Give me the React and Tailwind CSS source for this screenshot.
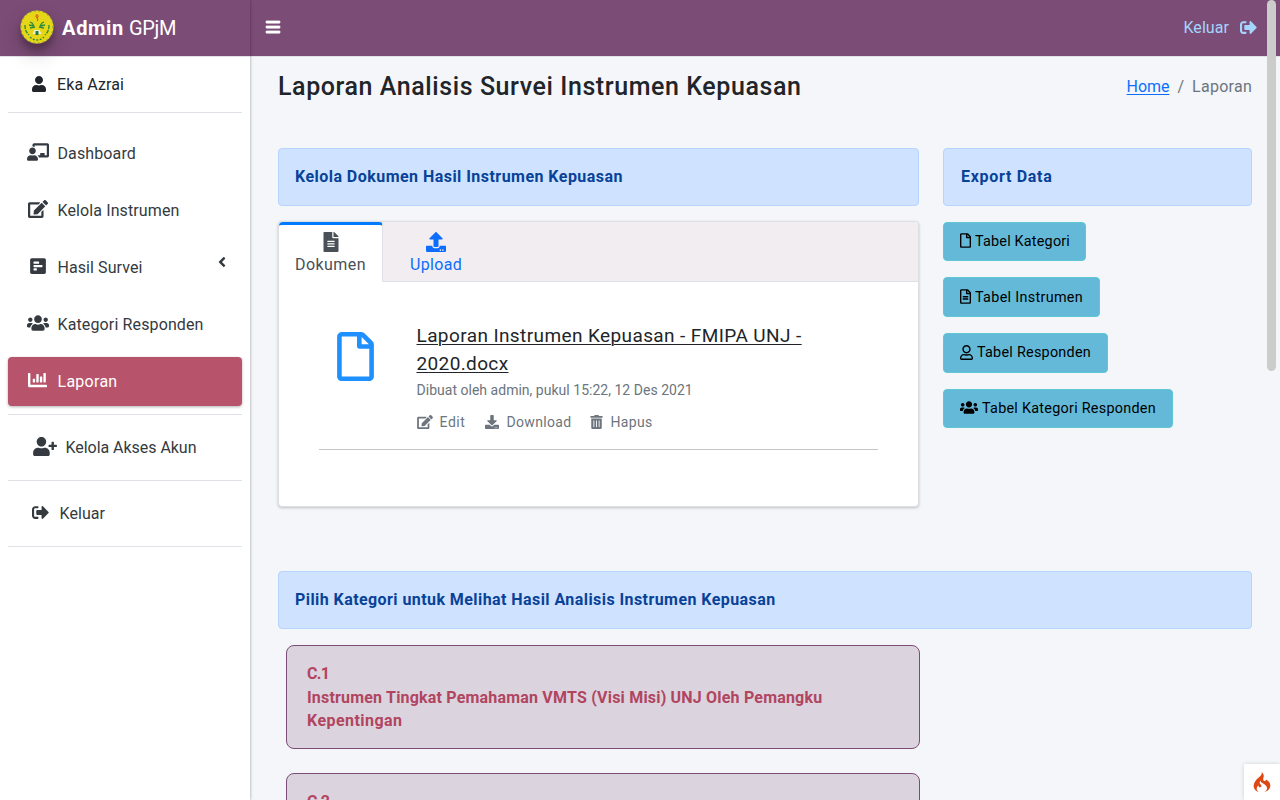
import {
  FaUser, FaRegUser, FaChalkboardTeacher, FaEdit, FaPollH, FaUsers, FaChartBar, FaUserPlus, FaSignOutAlt,
  FaBars, FaAngleLeft, FaFileAlt, FaUpload, FaDownload, FaTrashAlt, FaRegFile, FaRegFileAlt,
} from "react-icons/fa";
import { SiCodeigniter } from "react-icons/si";

const menu = [
  { icon: FaChalkboardTeacher, size: "h-[18px] w-[22px]", label: "Dashboard", tracking: "tracking-[0.12px]" },
  { icon: FaEdit, size: "h-[18px] w-[20px]", label: "Kelola Instrumen", tracking: "tracking-[0.11px]" },
  { icon: FaPollH, size: "h-[18px] w-[18px]", label: "Hasil Survei", tracking: "tracking-[0.08px]", arrow: true },
  { icon: FaUsers, size: "h-[18px] w-[22px]", label: "Kategori Responden", tracking: "tracking-[0.13px]" },
  { icon: FaChartBar, size: "h-[20px] w-[19px]", label: "Laporan", tracking: "tracking-[0.27px]", active: true },
];

const exportsList = [
  { icon: FaRegFile, label: "Tabel Kategori", size: "w-[11px]", width: "w-[143px] h-[39px]", tracking: "tracking-[0.2px]" },
  { icon: FaRegFileAlt, label: "Tabel Instrumen", size: "w-[11px]", width: "w-[157px] h-[40px] pt-px", tracking: "tracking-[0.31px]" },
  { icon: FaRegUser, label: "Tabel Responden", size: "w-[13px]", width: "w-[165px] h-[40px]", tracking: "tracking-[0.25px]" },
  { icon: FaUsers, label: "Tabel Kategori Responden", size: "w-[18px]", width: "w-[230px] h-[39px]", tracking: "tracking-[0.26px]" },
];

function Logo() {
  return (
    <svg viewBox="0 0 34 34" className="-ml-px h-[34px] w-[34px] rounded-full shadow-[0_10px_20px_rgba(0,0,0,0.19),0_6px_6px_rgba(0,0,0,0.23)]">
      <circle cx="17" cy="17" r="16.5" fill="#e5d617" />
      <circle cx="17" cy="17" r="16" fill="none" stroke="#6f9a35" strokeWidth="1" strokeDasharray="1.5 3" />
      <g fill="none" stroke="#2c8a3c" strokeWidth="1.3">
        <path d="M5 15c0 5 1 7 4 10M29 15c0 5-1 7-4 10" strokeDasharray="4 1" />
        <path d="M10 27c4 4 10 4 14 0" strokeDasharray="2 1.5" />
        <path d="M10 12l2 1 2 3M9 15l5 1M10 18l5-1M24 12l-2 1-2 3M25 15l-5 1M24 18l-5-1" />
      </g>
      <path d="M17 4.500l1.300 1.500-1.300 2-1.300-2zM17 8l1 2-1 1" fill="none" stroke="#e0431c" strokeWidth="1" />
      <path d="M12.500 24l2-4h5l2 4z" fill="#f1efd8" />
      <path d="M15.500 21h3v4h-3z" fill="#217c3b" />
    </svg>
  );
}

function Alert({ children, className }) {
  return (
    <div className={`flex h-[58px] items-center rounded border border-[#b6d4fe] bg-[#cfe2ff] px-4 font-bold text-[#084298] ${className}`}>
      {children}
    </div>
  );
}

function Sidebar() {
  return (
    <aside className="relative z-10 flex h-full w-[250px] shrink-0 flex-col bg-white text-[#343a40] shadow-[0_0_3px_rgba(0,0,0,0.38)]">
      <div className="flex h-[57px] shrink-0 items-center gap-2 border-b border-[#dee2e6] bg-[#7b4c76] pl-[21px] pb-[2px] text-xl text-white">
        <Logo />
        <span className="flex gap-[5px] pt-[2px]">
          <b className="font-bold tracking-[0.69px]">Admin</b>
          <span className="font-normal tracking-[-0.3px]">GPjM</span>
        </span>
      </div>
      <div className="mx-2 flex h-14 items-center border-b border-[#dee2e6] pl-[23px] text-[#212529]">
        <FaUser className="mb-px h-4 w-4" />
        <span className="ml-[10px] tracking-[0.11px]">Eka Azrai</span>
      </div>
      <nav className="mx-2 mt-4 flex flex-col gap-2">
        {menu.map(({ icon: Icon, size, label, tracking, arrow, active }) => (
          <div
            key={label}
            className={`flex h-[49px] items-center rounded pl-[14.5px] ${active ? "bg-[#b7546b] text-white shadow-[0_1px_3px_rgba(0,0,0,0.3)]" : ""}`}
          >
            <span className="flex w-[30px] justify-center pb-[3px]"><Icon className={size} /></span>
            <span className={`ml-[5px] ${tracking}`}>{label}</span>
            {arrow && <FaAngleLeft className="mr-3 mb-[11px] ml-auto h-4 w-4" />}
          </div>
        ))}
      </nav>
      <div className="mx-2 mt-2 flex h-[67px] items-center border-y border-[#dee2e6] pl-[25px]">
        <FaUserPlus className="mb-[3px] h-[19px] w-6" />
        <span className="ml-[8.5px] tracking-[-0.04px]">Kelola Akses Akun</span>
      </div>
      <div className="mx-2 flex h-[66px] items-center border-b border-[#dee2e6] pl-[23.5px]">
        <FaSignOutAlt className="mb-[2px] h-[17px] w-[17px]" />
        <span className="ml-[11px] tracking-[0.06px]">Keluar</span>
      </div>
    </aside>
  );
}

function DocumentCard() {
  return (
    <section className="mt-[15px] h-[286px] rounded border border-[#dedfe2] bg-white shadow-[0_1px_3px_rgba(0,0,0,0.22)]">
      <div className="flex h-[60px] rounded-t border-b border-[#dee2e6] bg-[#f1edf1]">
        <div className="-mb-px flex w-[104px] flex-col items-center rounded-t border-t-[3px] border-r border-t-[#007bff] border-r-[#dee2e6] bg-white pt-[7px] text-[#495057]">
          <FaFileAlt className="h-5 w-5" />
          <span className="mt-[1px] leading-6 tracking-[0.44px]">Dokumen</span>
        </div>
        <div className="flex w-[106px] flex-col items-center pt-[10px] text-[#0d6efd]">
          <FaUpload className="h-5 w-5" />
          <span className="mt-[1px] leading-6 tracking-[0.32px]">Upload</span>
        </div>
      </div>
      <div className="mx-10 flex h-[168px] border-b border-[#c4c5c7]">
        <FaRegFile className="mt-[50px] ml-[18px] h-[49px] w-[37px] shrink-0 text-[#1e90ff]" />
        <div className="ml-[42.5px] pt-10">
          <div className="text-[19px] leading-7 whitespace-nowrap text-[#212529] underline decoration-1 underline-offset-[2px]">
            <div className="tracking-[0.4px]">Laporan Instrumen Kepuasan - FMIPA UNJ -</div>
            <div className="tracking-[0.37px]">2020.docx</div>
          </div>
          <div className="mt-[2px] text-sm leading-[21px] text-[#6c757d]">
            <div className="tracking-[0.02px]">Dibuat oleh admin, pukul 15:22, 12 Des 2021</div>
            <div className="mt-[11px] flex items-center">
              <FaEdit className="mb-px h-[14px] w-4" />
              <span className="ml-[7px] tracking-[0.57px]">Edit</span>
              <FaDownload className="mb-px ml-[19px] h-[14px] w-[14px]" />
              <span className="ml-2 tracking-[0.33px]">Download</span>
              <FaTrashAlt className="mb-px ml-[19px] h-[14px] w-[13px]" />
              <span className="ml-[7px] tracking-[0.32px]">Hapus</span>
            </div>
          </div>
        </div>
      </div>
    </section>
  );
}

function Category({ code, children, className }) {
  return (
    <div className={`ml-2 h-[104px] w-[634px] shrink-0 rounded-lg border border-[#7b4c76] bg-[#dbd3de] px-5 pt-4 leading-[23.5px] font-bold text-[#b14560] ${className}`}>
      <div className="tracking-[-0.7px]">{code}</div>
      {children}
    </div>
  );
}

export default function App() {
  return (
    <div className="relative flex h-screen w-full overflow-hidden bg-[#f4f6f9] font-['Roboto',sans-serif] text-base leading-6">
      <Sidebar />
      <div className="flex min-w-0 flex-1 flex-col">
        <header className="flex h-[57px] shrink-0 items-center border-b border-[#dee2e6] bg-[#7b4c76] pr-[23px] pl-[15px]">
          <FaBars className="mb-[2px] h-4 w-4 stroke-white stroke-[20px] text-white" />
          <span className="ml-auto text-[#a3d5fd] tracking-[0.06px]">Keluar</span>
          <FaSignOutAlt className="mb-[2px] ml-[11px] h-[17px] w-[17px] text-[#a3d5fd]" />
        </header>
        <main className="flex min-h-0 flex-1 flex-col overflow-hidden pr-7 pl-7">
          <div className="mt-[14px] flex h-[31px] shrink-0 items-center justify-between">
            <h1 className="text-[25px] font-medium tracking-[0.58px] text-[#212529]">Laporan Analisis Survei Instrumen Kepuasan</h1>
            <div className="flex gap-2 text-[#6c757d]">
              <span className="text-[#0d6efd] tracking-[-0.05px] underline decoration-1 underline-offset-2">Home</span>
              <span>/</span>
              <span className="tracking-[0.27px]">Laporan</span>
            </div>
          </div>
          <div className="mt-[46px] flex shrink-0 gap-6">
            <div className="w-[641px]">
              <Alert className="tracking-[0.46px]">Kelola Dokumen Hasil Instrumen Kepuasan</Alert>
              <DocumentCard />
            </div>
            <div className="w-[309px]">
              <Alert className="pl-[17px] tracking-[0.7px]">Export Data</Alert>
              <div className="mt-4 flex flex-col items-start gap-4">
                {exportsList.map(({ icon: Icon, label, size, width, tracking }) => (
                  <div key={label} className={`flex items-center gap-1 rounded border border-[#5fc7d3] bg-[#64b9d9] pl-4 text-[14.4px] whitespace-nowrap text-black ${width}`}>
                    <Icon className={`mb-[2px] h-[15px] ${size}`} />
                    <span className={tracking}>{label}</span>
                  </div>
                ))}
              </div>
            </div>
          </div>
          <Alert className="mt-16 shrink-0 tracking-[0.43px]">Pilih Kategori untuk Melihat Hasil Analisis Instrumen Kepuasan</Alert>
          <Category code="C.1" className="mt-4">
            <div className="tracking-[0.19px]">Instrumen Tingkat Pemahaman VMTS (Visi Misi) UNJ Oleh Pemangku</div>
            <div className="tracking-[0.45px]">Kepentingan</div>
          </Category>
          <Category code="C.2" className="mt-6" />
        </main>
      </div>
      <div className="absolute top-0 right-1 z-20 h-[371px] w-[9px] rounded-full bg-[#cccccc]" />
      <div className="absolute right-0 bottom-0 z-20 flex h-9 w-9 items-center justify-center bg-white shadow-[0_0_4px_rgba(0,0,0,0.15)]">
        <SiCodeigniter className="h-5 w-5 text-[#dd4814]" />
      </div>
    </div>
  );
}
